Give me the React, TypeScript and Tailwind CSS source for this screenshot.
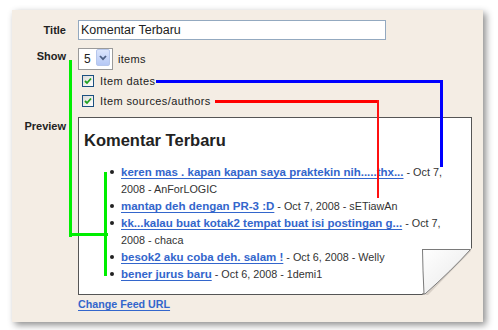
import React from "react";

const items = [
  { link: "keren mas . kapan kapan saya praktekin nih.....thx...", rest: "\u00a0- Oct 7,", rest2: "2008 - AnForLOGIC" },
  { link: "mantap deh dengan PR-3 :D", rest: "\u00a0- Oct 7, 2008 - sETiawAn" },
  { link: "kk...kalau buat kotak2 tempat buat isi postingan g...", rest: "\u00a0- Oct 7,", rest2: "2008 - chaca" },
  { link: "besok2 aku coba deh. salam !", rest: "\u00a0- Oct 6, 2008 - Welly" },
  { link: "bener jurus baru", rest: "\u00a0- Oct 6, 2008 - 1demi1" },
];

function Check() {
  return (
    <span className="flex h-[12px] w-[12px] items-center justify-center border border-[#1c5180] bg-gradient-to-br from-[#dcdcd7] to-white">
      <svg width="8" height="8" viewBox="0 0 8 8">
        <path d="M1 4 L3 6 L7 1.5" fill="none" stroke="#21a121" strokeWidth="1.8" />
      </svg>
    </span>
  );
}

export default function App() {
  return (
    <div className="relative h-[330px] w-[498px] overflow-hidden bg-white pl-[12px] pt-[10px] font-['Liberation_Sans',Arial,sans-serif] text-[#222]">
      <div className="h-[312px] w-[471px] bg-[#f4ede4] pt-[10px] shadow-[3px_3px_7px_rgba(0,0,0,0.45)]">
        {/* Title row */}
        <div className="flex items-center">
          <div className="w-[54px] text-right text-[11px] font-bold leading-[14px]">Title</div>
          <div className="ml-[12px] flex h-[20px] w-[308px] items-center border border-[#93a9c0] bg-white pl-[2px] text-[12.5px]">
            Komentar Terbaru
          </div>
        </div>
        {/* Show row */}
        <div className="mt-[8px] flex items-start">
          <div className="w-[54px] pt-[1px] text-right text-[11px] font-bold leading-[14px]">Show</div>
          <div className="ml-[12px] flex flex-col">
            <div className="flex items-center">
              <div className="relative flex h-[22px] w-[35px] items-start border border-[#9a9a9a] bg-white">
                <span className="ml-[5px] mt-[3px] text-[12px] leading-[14px]">5</span>
                <span className="absolute left-[17px] top-[0px] flex h-[17px] w-[14px] items-center justify-center rounded-[2px] border border-[#b6c7ec] bg-gradient-to-b from-[#dce6fc] to-[#b5c8f5]">
                  <svg width="8" height="6" viewBox="0 0 8 6">
                    <path d="M1 1 L4 4.2 L7 1" fill="none" stroke="#4d6185" strokeWidth="1.8" />
                  </svg>
                </span>
              </div>
              <span className="ml-[5px] text-[11px] tracking-[0.3px]">items</span>
            </div>
            <div className="mt-[1px] flex h-[20px] items-center pl-[4px]">
              <Check />
              <span className="ml-[6px] text-[11px] tracking-[0.4px]">Item dates</span>
            </div>
            <div className="flex h-[20px] items-center pl-[4px]">
              <Check />
              <span className="ml-[6px] text-[11px] tracking-[0.4px]">Item sources/authors</span>
            </div>
          </div>
        </div>
        {/* Preview row */}
        <div className="mt-[6px] flex items-start">
          <div className="w-[54px] pt-[2px] text-right text-[11px] font-bold leading-[14px]">Preview</div>
          <div className="ml-[12px] flex flex-col">
            <div className="relative h-[178px] w-[394px] border border-[#555] bg-white pl-[5px] pt-[12px]">
              <div className="text-[16.5px] font-bold leading-[20px] text-[#222]">Komentar Terbaru</div>
              <ul className="mt-[14px] flex flex-col">
                {items.map((it, i) => (
                  <li key={i} className="flex items-start">
                    <span className="ml-[26px] mt-[6px] h-[4px] w-[4px] rounded-full bg-[#222]" />
                    <div className="ml-[7px] whitespace-nowrap text-[10.8px] leading-[17px] text-[#333]">
                      <span className="text-[11.5px] font-bold text-[#3366cc] underline decoration-[1px] underline-offset-[2px]">{it.link}</span>
                      <span>{it.rest}</span>
                      {it.rest2 && (
                        <>
                          <br />
                          <span>{it.rest2}</span>
                        </>
                      )}
                    </div>
                  </li>
                ))}
              </ul>
              {/* page curl */}
              <svg className="absolute bottom-[-1px] right-[-1px]" width="50" height="47" viewBox="0 0 50 47">
                <defs>
                  <linearGradient id="flap" x1="0" y1="0" x2="1" y2="1">
                    <stop offset="0" stopColor="#ffffff" />
                    <stop offset="0.55" stopColor="#f2f2f2" />
                    <stop offset="1" stopColor="#9a9a9a" />
                  </linearGradient>
                </defs>
                <polygon points="50,0 50,47 0,47" fill="#f4ede4" />
                <polygon points="49,1 49,3 6,47 3,47" fill="#d8d0c7" />
                <path d="M0 1.5 L48.5 1.5 Q30 22 3 46 L2 46 Q0.8 22 0.5 1.5 Z" fill="url(#flap)" stroke="#7a7a7a" strokeWidth="1" />
                <line x1="0" y1="46" x2="2" y2="46" stroke="#555" strokeWidth="1" />
              </svg>
            </div>
            <a className="mt-[2px] w-fit text-[10.7px] font-bold leading-[14px] text-[#3366cc] underline decoration-[1px] underline-offset-[2px]">
              Change Feed URL
            </a>
          </div>
        </div>
      </div>
      {/* annotation lines */}
      <svg className="pointer-events-none absolute left-0 top-0" width="498" height="330">
        <rect x="69" y="60" width="3" height="177" fill="#00ee00" />
        <rect x="69" y="233" width="39" height="3" fill="#00ee00" />
        <rect x="104" y="172" width="3" height="104" fill="#00ee00" />
        <rect x="156" y="80" width="287" height="3" fill="#0000ff" />
        <rect x="440" y="80" width="3" height="87" fill="#0000ff" />
        <rect x="215" y="100" width="164" height="3" fill="#ff0000" />
        <rect x="377" y="100" width="2" height="98" fill="#ff1010" />
      </svg>
    </div>
  );
}
